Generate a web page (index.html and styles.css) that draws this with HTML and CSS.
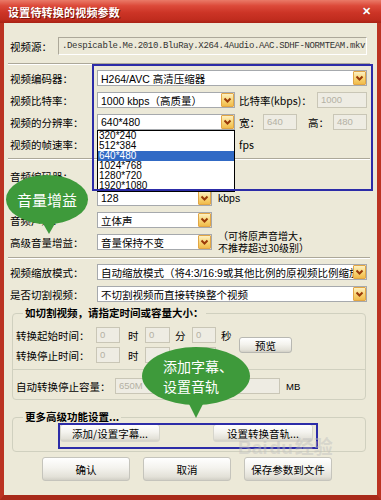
FILE: index.html
```html
<!DOCTYPE html>
<html>
<head>
<meta charset="utf-8">
<link rel="stylesheet" href="styles.css">
</head>
<body>
<div class="window">
  <div class="titlebar">
    <span class="title">设置待转换的视频参数</span>
    <span class="close">✕</span>
  </div>
  <div class="frame">
    <div class="content">
      <div class="row src-row">
        <span class="lbl lbl-src">视频源：</span>
        <div class="src-field">.Despicable.Me.2010.BluRay.X264.4Audio.AAC.SDHF-NORMTEAM.mkv</div>
      </div>
      <div class="sep sep1"></div>

      <div class="row">
        <span class="lbl">视频编码器：</span>
        <div class="sel sel-full"><span class="sel-text">H264/AVC 高清压缩器</span><span class="dd"><svg width="11" height="12" viewBox="0 0 11 12"><polyline points="2.5,4.5 5.5,7.5 8.5,4.5" fill="none" stroke="#9a3a08" stroke-width="2"/></svg></span></div>
      </div>
      <div class="row">
        <span class="lbl">视频比特率：</span>
        <div class="sel sel-mid"><span class="sel-text">1000 kbps（高质量）</span><span class="dd"><svg width="11" height="12" viewBox="0 0 11 12"><polyline points="2.5,4.5 5.5,7.5 8.5,4.5" fill="none" stroke="#9a3a08" stroke-width="2"/></svg></span></div>
        <span class="rtxt">比特率(kbps)：</span>
        <div class="dis dis-rate">1000</div>
      </div>
      <div class="row">
        <span class="lbl">视频的分辨率：</span>
        <div class="sel sel-mid"><span class="sel-text">640*480</span><span class="dd"><svg width="11" height="12" viewBox="0 0 11 12"><polyline points="2.5,4.5 5.5,7.5 8.5,4.5" fill="none" stroke="#9a3a08" stroke-width="2"/></svg></span></div>
        <span class="rtxt w-lbl">宽：</span>
        <div class="dis dis-sm">640</div>
        <span class="rtxt h-lbl">高：</span>
        <div class="dis dis-sm">480</div>
      </div>
      <div class="row">
        <span class="lbl">视频的帧速率：</span>
        <div class="sel sel-mid"><span class="sel-text"></span><span class="dd"></span></div>
        <span class="rtxt">fps</span>
      </div>
      <div class="sep sep2"></div>

      <div class="row">
        <span class="lbl">音频编码器：</span>
        <div class="sel sel-mid"><span class="sel-text"></span><span class="dd"></span></div>
      </div>
      <div class="row">
        <span class="lbl">音频比特率：</span>
        <div class="sel sel-short"><span class="sel-text">128</span><span class="dd"><svg width="11" height="12" viewBox="0 0 11 12"><polyline points="2.5,4.5 5.5,7.5 8.5,4.5" fill="none" stroke="#9a3a08" stroke-width="2"/></svg></span></div>
        <span class="rtxt kbps">kbps</span>
      </div>
      <div class="row">
        <span class="lbl">音频声道：</span>
        <div class="sel sel-short"><span class="sel-text">立体声</span><span class="dd"><svg width="11" height="12" viewBox="0 0 11 12"><polyline points="2.5,4.5 5.5,7.5 8.5,4.5" fill="none" stroke="#9a3a08" stroke-width="2"/></svg></span></div>
      </div>
      <div class="row">
        <span class="lbl">高级音量增益：</span>
        <div class="sel sel-short"><span class="sel-text">音量保持不变</span><span class="dd"><svg width="11" height="12" viewBox="0 0 11 12"><polyline points="2.5,4.5 5.5,7.5 8.5,4.5" fill="none" stroke="#9a3a08" stroke-width="2"/></svg></span></div>
        <span class="note">（可将原声音增大，<br>不推荐超过30级别）</span>
      </div>
      <div class="sep sep3"></div>

      <div class="row">
        <span class="lbl">视频缩放模式：</span>
        <div class="sel sel-full"><span class="sel-text">自动缩放模式（将4:3/16:9或其他比例的原视频比例缩放</span><span class="dd"><svg width="11" height="12" viewBox="0 0 11 12"><polyline points="2.5,4.5 5.5,7.5 8.5,4.5" fill="none" stroke="#9a3a08" stroke-width="2"/></svg></span></div>
      </div>
      <div class="row">
        <span class="lbl">是否切割视频：</span>
        <div class="sel sel-full"><span class="sel-text">不切割视频而直接转换整个视频</span><span class="dd"><svg width="11" height="12" viewBox="0 0 11 12"><polyline points="2.5,4.5 5.5,7.5 8.5,4.5" fill="none" stroke="#9a3a08" stroke-width="2"/></svg></span></div>
      </div>

      <fieldset class="group group1">
        <legend>如切割视频，请指定时间或容量大小：</legend>
        <div class="time-block">
          <div class="time-col">
            <div class="trow">
              <span class="glbl">转换起始时间：</span>
              <div class="dis tin">0</div><span class="unit u-h">时</span>
              <div class="dis tin tin2">0</div><span class="unit u-m">分</span>
              <div class="dis tin">0</div><span class="unit u-s">秒</span>
            </div>
            <div class="trow">
              <span class="glbl">转换停止时间：</span>
              <div class="dis tin">0</div><span class="unit u-h">时</span>
              <div class="dis tin tin2"></div><span class="unit u-m"></span>
              <div class="dis tin"></div><span class="unit u-s"></span>
            </div>
          </div>
          <div class="btn btn-preview">预览</div>
        </div>
        <div class="gsep"></div>
        <div class="trow cap-row">
          <span class="glbl cap-lbl">自动转换停止容量：</span>
          <div class="dis cap-in">650M</div>
          <span class="unit mb">MB</span>
        </div>
      </fieldset>

      <fieldset class="group group2">
        <legend>更多高级功能设置...</legend>
        <div class="adv-row">
          <div class="btn btn-adv">添加/设置字幕...</div>
          <div class="btn btn-adv btn-adv2">设置转换音轨...</div>
        </div>
      </fieldset>

      <div class="bottom-row">
        <div class="btn btn-main">确认</div>
        <div class="btn btn-main">取消</div>
        <div class="btn btn-main">保存参数到文件</div>
      </div>
    </div>
  </div>

  <div class="dropdown-list">
    <div class="item">320*240</div>
    <div class="item">512*384</div>
    <div class="item selected">640*480</div>
    <div class="item">1024*768</div>
    <div class="item">1280*720</div>
    <div class="item">1920*1080</div>
  </div>

  <div class="mark mark1"></div>
  <div class="mark mark2"></div>

  <div class="watermark">Bai<span class="paw">du</span>经验</div>

  <div class="bubble bubble1"><span>音量增益</span></div>
  <div class="bubble bubble2"><span>添加字幕、<br>设置音轨</span></div>
</div>
</body>
</html>
```

FILE: styles.css
```css
* { box-sizing: border-box; }
html, body { margin: 0; padding: 0; }
body {
  width: 381px;
  height: 500px;
  overflow: hidden;
  background: #ffffff;
  font-family: "Liberation Sans", "Noto Sans CJK SC", sans-serif;
  color: #000;
}
.window {
  position: relative;
  width: 381px;
  height: 500px;
  display: flex;
  flex-direction: column;
}
.titlebar {
  height: 23px;
  flex: none;
  display: flex;
  align-items: center;
  justify-content: space-between;
  padding: 0 10px 0 8px;
  background: linear-gradient(180deg, #ea7a68 0%, #dc4a3a 25%, #cc3426 55%, #c02c1e 85%, #a82214 100%);
}
.title {
  color: #fff;
  font-family: "Noto Sans CJK SC", sans-serif;
  font-weight: bold;
  font-size: 11px;
  text-shadow: 1px 1px 0 #7a1408;
  letter-spacing: 0.2px;
}
.close {
  color: #fff;
  font-size: 11px;
  font-weight: bold;
  text-shadow: 0 0 1px #a02010;
}
.frame {
  flex: 1;
  border-left: 4px solid #bb3322;
  border-right: 4px solid #bb3322;
  border-bottom: 5px solid #a82a1a;
  background: #ece9d8;
}
.content {
  padding: 14px 10px 0 6px;
}
.row {
  display: flex;
  align-items: center;
  height: 22px;
}
.src-row { height: 18px; }
.lbl {
  width: 87px;
  flex: none;
  font-family: "Noto Sans CJK SC", sans-serif;
  font-size: 10.5px;
  white-space: nowrap;
}
.lbl-src { width: 48px; }
.src-field {
  width: 309px;
  height: 18px;
  border: 1px solid;
  border-color: #aca899 #ffffff #ffffff #aca899;
  background: #ece9d8;
  font-family: "Liberation Mono", monospace;
  font-size: 9px;
  letter-spacing: -0.35px;
  line-height: 16px;
  padding-left: 3px;
  color: #333;
  white-space: nowrap;
  overflow: hidden;
}
.sep {
  height: 2px;
  border-top: 1px solid #aca899;
  border-bottom: 1px solid #ffffff;
  margin-left: -2px;
  margin-right: -3px;
}
.sep1 { margin-top: 8px; margin-bottom: 2px; }
.sep2 { margin-top: 3px; margin-bottom: 5px; }
.sep3 { margin-top: 4px; margin-bottom: 2px; }

.sel {
  height: 16px;
  flex: none;
  border: 1px solid #a6a9ad;
  background: #fff;
  display: flex;
  align-items: center;
  padding-left: 3px;
  font-family: "Liberation Sans", "Noto Sans CJK SC", sans-serif;
  font-size: 10.5px;
  white-space: nowrap;
  overflow: hidden;
}
.sel-text { overflow: hidden; flex: 1; }
.sel-full { width: 270px; }
.sel-mid { width: 138px; }
.sel-short { width: 115px; }
.dd {
  flex: none;
  width: 13px;
  height: 14px;
  border: 1px solid #e2a645;
  border-radius: 1px;
  background: linear-gradient(180deg, #fdf0c2 0%, #f8d77a 50%, #f1bb4a 100%);
  display: flex;
  align-items: center;
  justify-content: center;
}
.rtxt {
  flex: none;
  font-family: "Noto Sans CJK SC", sans-serif;
  font-size: 10.5px;
  margin-left: 4px;
  white-space: nowrap;
}
.kbps { margin-left: 6px; font-family: "Liberation Sans", sans-serif; }
.dis {
  flex: none;
  height: 16px;
  border: 1px solid #c9c6b6;
  background: #eeece3;
  color: #b4b1a4;
  font-family: "Liberation Sans", sans-serif;
  font-size: 9.5px;
  line-height: 14px;
  padding-left: 3px;
  white-space: nowrap;
  overflow: hidden;
}
.dis-rate { width: 50px; margin-left: auto; }
.w-lbl { width: 24px; }
.h-lbl { width: 25px; margin-left: 11px; }
.dis-sm { width: 34px; }
.note {
  margin-left: 6px;
  font-family: "Noto Sans CJK SC", sans-serif;
  font-size: 10px;
  line-height: 12px;
  white-space: nowrap;
}

.group {
  border: 1px solid #d0d0bf;
  border-radius: 4px;
  margin: 2px 1px 0 2px;
  padding: 0 3px 2px 3px;
  min-width: 0;
}
.group legend {
  margin-left: 7px;
  padding: 0 2px;
  font-family: "Noto Sans CJK SC", sans-serif;
  font-weight: bold;
  font-size: 10.5px;
  line-height: 12px;
}
.group2 { margin-top: 11px; padding-bottom: 9px; }

.time-block {
  display: flex;
  align-items: center;
  margin-top: 6px;
}
.trow {
  display: flex;
  align-items: center;
  height: 20px;
}
.glbl {
  width: 80px;
  flex: none;
  font-family: "Noto Sans CJK SC", sans-serif;
  font-size: 10.5px;
  white-space: nowrap;
}
.tin { width: 24px; }
.tin2 { width: 25px; }
.unit {
  flex: none;
  font-family: "Noto Sans CJK SC", sans-serif;
  font-size: 10.5px;
}
.u-h { width: 25px; padding-left: 8px; }
.u-m { width: 22px; padding-left: 5px; }
.u-s { width: 23px; padding-left: 5px; }

.btn {
  flex: none;
  display: flex;
  align-items: center;
  justify-content: center;
  border: 1px solid #8c8c88;
  border-radius: 3px;
  background: linear-gradient(180deg, #ffffff 0%, #f4f3ee 45%, #e3e1d8 85%, #d2d0c6 100%);
  font-family: "Noto Sans CJK SC", sans-serif;
  font-size: 10.5px;
  color: #000;
  white-space: nowrap;
}
.btn-preview {
  width: 53px;
  height: 16px;
  border-color: #b8b8b2;
}
.gsep {
  height: 1px;
  background: #d0d0bf;
  margin: 4px -3px 0 -3px;
}
.cap-row { margin-top: 5px; height: 22px; }
.cap-lbl { width: 99px; }
.cap-in { width: 165px; }
.mb { margin-left: 6px; font-family: "Liberation Sans", sans-serif; font-size: 9.5px; }

.adv-row {
  display: flex;
  margin-top: 1px;
  padding-left: 44px;
  gap: 53px;
}
.btn-adv {
  width: 100px;
  height: 18px;
  border-color: #d6d5cc;
}
.bottom-row {
  display: flex;
  margin-top: 5px;
  padding-left: 32px;
  gap: 13px;
}
.btn-main {
  width: 88px;
  height: 24px;
  border-color: #c5c4bc;
}

.dropdown-list {
  position: absolute;
  left: 97px;
  top: 130px;
  width: 138px;
  height: 62px;
  background: #fff;
  border: 1px solid #000;
  font-family: "Liberation Sans", sans-serif;
  font-size: 10px;
}
.item {
  height: 10px;
  line-height: 10px;
  padding-left: 1px;
}
.item.selected {
  background: #316ac5;
  color: #fff;
}

.mark {
  position: absolute;
  border: 2px solid #2c2ca8;
}
.mark1 { left: 92px; top: 64px; width: 281px; height: 127px; }
.mark2 { left: 58px; top: 423px; width: 260px; height: 26px; }

.watermark {
  position: absolute;
  left: 238px;
  top: 432px;
  font-family: "Liberation Sans", "Noto Sans CJK SC", sans-serif;
  font-size: 19px;
  font-weight: bold;
  color: rgba(190, 190, 190, 0.45);
  white-space: nowrap;
}
.paw { margin: 0 2px; }

.bubble {
  position: absolute;
  background: #3e9a3b;
  border-radius: 50%;
  color: #fff;
  font-family: "Noto Sans CJK SC", sans-serif;
  display: flex;
  align-items: center;
  justify-content: center;
}
.bubble::after {
  content: "";
  position: absolute;
  width: 0;
  height: 0;
  border-left: 8px solid transparent;
  border-right: 8px solid transparent;
  border-top: 14px solid #3e9a3b;
}
.bubble1 {
  left: 6px;
  top: 175px;
  width: 82px;
  height: 49px;
  font-size: 15px;
}
.bubble1::after { left: 35px; top: 45px; }
.bubble2 {
  left: 142px;
  top: 347px;
  width: 108px;
  height: 58px;
  font-size: 14px;
  line-height: 20px;
}
.bubble2 span { display: block; text-align: left; padding-left: 4px; }
.bubble2::after { left: 46px; top: 55px; border-top-width: 16px; }
```
